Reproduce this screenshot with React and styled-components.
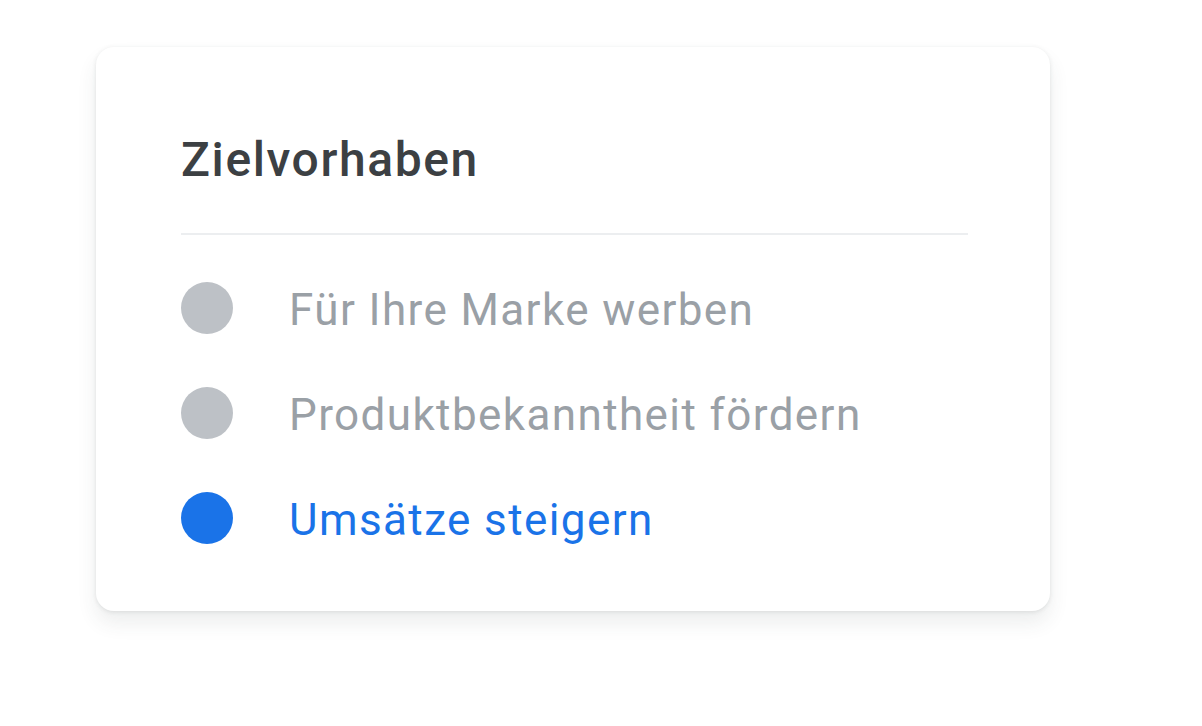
import React from "react";
import styled, { createGlobalStyle } from "styled-components";

const GlobalStyle = createGlobalStyle`
  body {
    margin: 0;
    background: #fff;
    font-family: Roboto, "Noto Sans", sans-serif;
  }
`;

const options = [
  { key: "1", label: "Für Ihre Marke werben", active: false },
  { key: "2", label: "Produktbekanntheit fördern", active: false },
  { key: "3", label: "Umsätze steigern", active: true },
];

const App = () => (
  <>
    <GlobalStyle />
    <Page>
      <Card>
        <Title>Zielvorhaben</Title>
        <Divider />
        <List>
          {options.map((item) => (
            <Option key={item.key}>
              <Dot active={item.active} />
              <Label active={item.active}>{item.label}</Label>
            </Option>
          ))}
        </List>
      </Card>
    </Page>
  </>
);

export default App;

const Page = styled.div`
  width: 1202px;
  height: 726px;
  padding: 47px 0 0 96px;
  box-sizing: border-box;
`;

const Card = styled.div`
  width: 954px;
  height: 564px;
  box-sizing: border-box;
  padding: 89px 82px 0 85px;
  background: #fff;
  border-radius: 18px;
  box-shadow: 0 1px 4px rgba(60, 64, 67, 0.12), 0 12px 20px rgba(60, 64, 67, 0.09);
`;

const Title = styled.h2`
  margin: 0;
  font-size: 48px;
  line-height: 1;
  font-weight: 500;
  color: #3c4043;
  letter-spacing: 1.6px;
`;

const Divider = styled.div`
  height: 2px;
  background: #eceef0;
  margin-top: 49px;
`;

const List = styled.ul`
  list-style: none;
  margin: 0;
  padding: 47px 0 0 0;
  display: flex;
  flex-direction: column;
  gap: 53px;
`;

const Option = styled.li`
  display: flex;
  align-items: center;
  gap: 56px;
  height: 52px;
`;

const Dot = styled.span`
  width: 52px;
  height: 52px;
  border-radius: 50%;
  flex-shrink: 0;
  background: ${(props) => (props.active ? "#1a73e8" : "#bdc1c6")};
`;

const Label = styled.span`
  font-size: 44px;
  line-height: 1;
  padding-top: 4px;
  color: ${(props) => (props.active ? "#1a73e8" : "#9aa0a6")};
  letter-spacing: 1.4px;
`;
